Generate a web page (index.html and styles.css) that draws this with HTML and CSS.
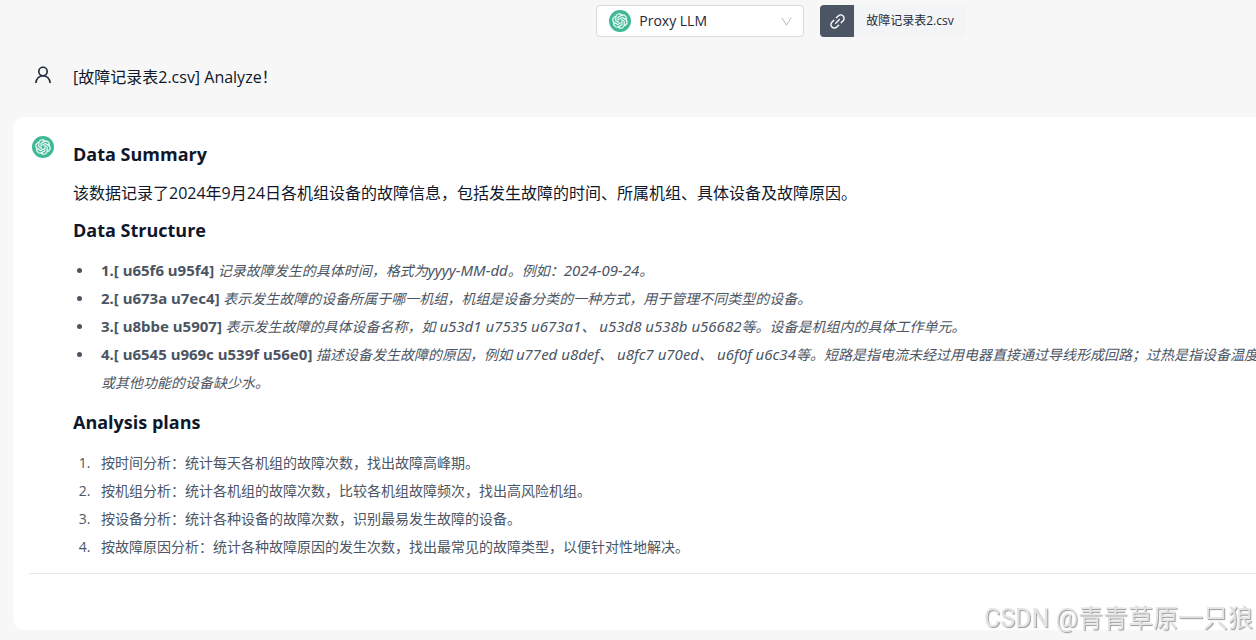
FILE: index.html
```html
<!DOCTYPE html>
<html lang="zh">
<head>
<meta charset="utf-8">
<meta name="viewport" content="width=device-width, initial-scale=1">
<title>Proxy LLM</title>
<link rel="stylesheet" href="styles.css">
</head>
<body>
<svg class="defs" aria-hidden="true">
  <symbol id="llm-logo" viewBox="0 0 36 36">
    <circle cx="18" cy="18" r="18" fill="#3fb896"/>
    <g transform="translate(5.4 5.4) scale(1.05)"><path fill="#fff" stroke="#fff" stroke-width=".3" d="M22.2819 9.8211a5.9847 5.9847 0 0 0-.5157-4.9108 6.0462 6.0462 0 0 0-6.5098-2.9A6.0651 6.0651 0 0 0 4.9807 4.1818a5.9847 5.9847 0 0 0-3.9977 2.9 6.0462 6.0462 0 0 0 .7427 7.0966 5.98 5.98 0 0 0 .511 4.9107 6.051 6.051 0 0 0 6.5146 2.9001A5.9847 5.9847 0 0 0 13.2599 24a6.0557 6.0557 0 0 0 5.7718-4.2058 5.9894 5.9894 0 0 0 3.9977-2.9001 6.0557 6.0557 0 0 0-.7475-7.0729zm-9.022 12.6081a4.4755 4.4755 0 0 1-2.8764-1.0408l.1419-.0804 4.7783-2.7582a.7948.7948 0 0 0 .3927-.6813v-6.7369l2.02 1.1686a.071.071 0 0 1 .038.052v5.5826a4.504 4.504 0 0 1-4.4945 4.4944zm-9.6607-4.1254a4.4708 4.4708 0 0 1-.5346-3.0137l.142.0852 4.783 2.7582a.7712.7712 0 0 0 .7806 0l5.8428-3.3685v2.3324a.0804.0804 0 0 1-.0332.0615L9.74 19.9502a4.4992 4.4992 0 0 1-6.1408-1.6464zM2.3408 7.8956a4.485 4.485 0 0 1 2.3655-1.9728V11.6a.7664.7664 0 0 0 .3879.6765l5.8144 3.3543-2.0201 1.1685a.0757.0757 0 0 1-.071 0l-4.8303-2.7865A4.504 4.504 0 0 1 2.3408 7.872zm16.5963 3.8558L13.1038 8.364 15.1192 7.2a.0757.0757 0 0 1 .071 0l4.8303 2.7913a4.4944 4.4944 0 0 1-.6765 8.1042v-5.6772a.79.79 0 0 0-.407-.667zm2.0107-3.0231l-.142-.0852-4.7735-2.7818a.7759.7759 0 0 0-.7854 0L9.409 9.2297V6.8974a.0662.0662 0 0 1 .0284-.0615l4.8303-2.7866a4.4992 4.4992 0 0 1 6.6802 4.66zM8.3065 12.863l-2.02-1.1638a.0804.0804 0 0 1-.038-.0567V6.0742a4.4992 4.4992 0 0 1 7.3757-3.4537l-.142.0805L8.704 5.459a.7948.7948 0 0 0-.3927.6813zm1.0976-2.3654l2.602-1.4998 2.6069 1.4998v2.9994l-2.5974 1.4997-2.6067-1.4997Z"/></g>
  </symbol>
</svg>

<header class="toolbar">
  <div class="model">
    <svg class="logo" aria-hidden="true"><use href="#llm-logo"/></svg>
    <select class="model-select" aria-label="Model"><option>Proxy LLM</option></select>
    <svg class="chevron" viewBox="0 0 12 12" aria-hidden="true"><path d="M1 2 6 10l5-8"/></svg>
  </div>
  <button class="file" type="button">
    <span class="file-icon"><svg viewBox="64 64 896 896" aria-hidden="true"><path d="M574 665.4a8.03 8.03 0 00-11.3 0L446.5 781.6c-53.8 53.8-144.6 59.5-204 0-59.5-59.5-53.8-150.2 0-204l116.2-116.2c3.1-3.1 3.1-8.2 0-11.3l-39.8-39.8a8.03 8.03 0 00-11.3 0L191.4 526.5c-84.6 84.6-84.6 221.5 0 306s221.5 84.6 306 0l116.2-116.2c3.1-3.1 3.1-8.2 0-11.3L574 665.4zm258.6-474c-84.6-84.6-221.5-84.6-306 0L410.3 307.6a8.03 8.03 0 000 11.3l39.7 39.7c3.1 3.1 8.2 3.1 11.3 0l116.2-116.2c53.8-53.8 144.6-59.5 204 0 59.5 59.5 53.8 150.2 0 204L665.3 562.6a8.03 8.03 0 000 11.3l39.8 39.8c3.1 3.1 8.2 3.1 11.3 0l116.2-116.2c84.5-84.6 84.5-221.5 0-306.1zM610.1 372.3a8.03 8.03 0 00-11.3 0L372.3 598.7a8.03 8.03 0 000 11.3l39.6 39.6c3.1 3.1 8.2 3.1 11.3 0l226.4-226.4c3.1-3.1 3.1-8.2 0-11.3l-39.5-39.6z"/></svg></span>
    <span class="file-name">故障记录表2.csv</span>
  </button>
</header>

<main>
  <section class="message question">
    <svg class="user" viewBox="0 0 18 18" aria-hidden="true"><circle cx="9" cy="5.5" r="4.2"/><path d="M1.8 17c.3-4.2 3.300-7.300 7.200-7.300s6.900 3.100 7.200 7.300"/></svg>
    <p class="text">[故障记录表2.csv] Analyze！</p>
  </section>

  <section class="card">
    <article class="message answer">
      <svg class="logo" aria-hidden="true"><use href="#llm-logo"/></svg>
      <div class="content">
        <h3>Data Summary</h3>
        <p class="text">该数据记录了2024年9月24日各机组设备的故障信息，包括发生故障的时间、所属机组、具体设备及故障原因。</p>
        <h3>Data Structure</h3>
        <ul>
          <li><strong>1.[ u65f6 u95f4]</strong> <em>记录故障发生的具体时间，格式为<span class="latin">yyyy-MM-dd</span>。例如：<span class="latin">2024-09-24</span>。</em></li>
          <li><strong>2.[ u673a u7ec4]</strong> <em>表示发生故障的设备所属于哪一机组，机组是设备分类的一种方式，用于管理不同类型的设备。</em></li>
          <li><strong>3.[ u8bbe u5907]</strong> <em>表示发生故障的具体设备名称，如<span class="latin"> u53d1 u7535 u673a1</span>、<span class="latin"> u53d8 u538b u56682</span>等。设备是机组内的具体工作单元。</em></li>
          <li><strong>4.[ u6545 u969c u539f u56e0]</strong> <em>描述设备发生故障的原因，例如<span class="latin"> u77ed u8def</span>、<span class="latin"> u8fc7 u70ed</span>、<span class="latin"> u6f0f u6c34</span>等。短路是指电流未经过用电器直接通过导线形成回路；过热是指设备温度<br>或其他功能的设备缺少水。</em></li>
        </ul>
        <h3>Analysis plans</h3>
        <ol>
          <li>按时间分析：统计每天各机组的故障次数，找出故障高峰期。</li>
          <li>按机组分析：统计各机组的故障次数，比较各机组故障频次，找出高风险机组。</li>
          <li>按设备分析：统计各种设备的故障次数，识别最易发生故障的设备。</li>
          <li>按故障原因分析：统计各种故障原因的发生次数，找出最常见的故障类型，以便针对性地解决。</li>
        </ol>
      </div>
    </article>
    <hr>
  </section>
</main>
<div class="watermark">CSDN @青青草原一只狼</div>
</body>
</html>
```
FILE: styles.css
```css
* {
  box-sizing: border-box;
}

body {
  margin: 0;
  background: #f7f7f7;
  color: #0f172a;
  font: 16px/24px "Open Sans", "Noto Sans CJK SC", sans-serif;
  overflow: hidden;
}

.defs {
  position: absolute;
  width: 0;
  height: 0;
}

.toolbar {
  display: flex;
  justify-content: center;
  gap: 16px;
  padding: 5px 0 0 306px;
}

.model {
  display: flex;
  align-items: center;
  gap: 8px;
  width: 208px;
  height: 32px;
  padding: 0 11px 0 12px;
  background: #fff;
  border: 1px solid #d9d9d9;
  border-radius: 4px;
}

.logo {
  flex: none;
  width: 22px;
  height: 22px;
}

.model-select {
  flex: 1;
  min-width: 0;
  padding: 0;
  appearance: none;
  border: 0;
  background: transparent;
  color: #1f2937;
  font: inherit;
  font-size: 14px;
}

.chevron {
  width: 11px;
  height: 11px;
  fill: none;
  stroke: #b4b4b4;
}

.file {
  display: flex;
  height: 32px;
  padding: 0;
  border: 0;
  border-radius: 4px;
  overflow: hidden;
  background: #f3f4f6;
  color: #1f2937;
  font: inherit;
  font-size: 12px;
}

.file-icon {
  display: grid;
  place-items: center;
  width: 34px;
  height: 32px;
  background: #4b5563;
}

.file-icon svg {
  width: 17px;
  height: 17px;
  fill: #fff;
}

.file-name {
  align-self: center;
  padding: 0 12px;
}

.message {
  display: flex;
}

.question {
  gap: 21px;
  padding: 28px 0 28px 34px;
}

.user {
  width: 18px;
  height: 18px;
  margin-top: 1px;
  fill: none;
  stroke: #1e293b;
  stroke-width: 1.6;
}

.text {
  margin: 0;
}

.card {
  margin-left: 13px;
  padding: 19px 0 56px 16px;
  background: #fff;
  border-radius: 12px 0 0 12px;
}

.answer {
  gap: 19px;
  padding-left: 3px;
}

.content {
  flex: 1;
  min-width: 0;
  padding-top: 4px;
  white-space: nowrap;
}

h3 {
  margin: 0;
  font-size: 18px;
  line-height: 28px;
  font-weight: 700;
}

.content .text {
  margin: 13px 0 11px;
}

ul,
ol {
  margin: 13px 0 11px;
  padding-left: 21px;
  color: #4b5563;
  font-size: 14px;
  line-height: 28px;
}

ul {
  font-family: "Noto Sans", "Noto Sans CJK SC", sans-serif;
}

ol {
  margin-bottom: 0;
}

li {
  padding-left: 7px;
}

strong,
.latin {
  font-size: 15px;
  line-height: 20px;
}

hr {
  height: 1px;
  margin: 12px 0 0;
  border: 0;
  background: #e5e7eb;
}

.watermark {
  position: fixed;
  right: 3px;
  bottom: 4px;
  color: #e4e4e4;
  font: 25px/34px Roboto, "Noto Sans CJK SC", sans-serif;
  text-shadow: 1px 1px 1px #999;
}
```
